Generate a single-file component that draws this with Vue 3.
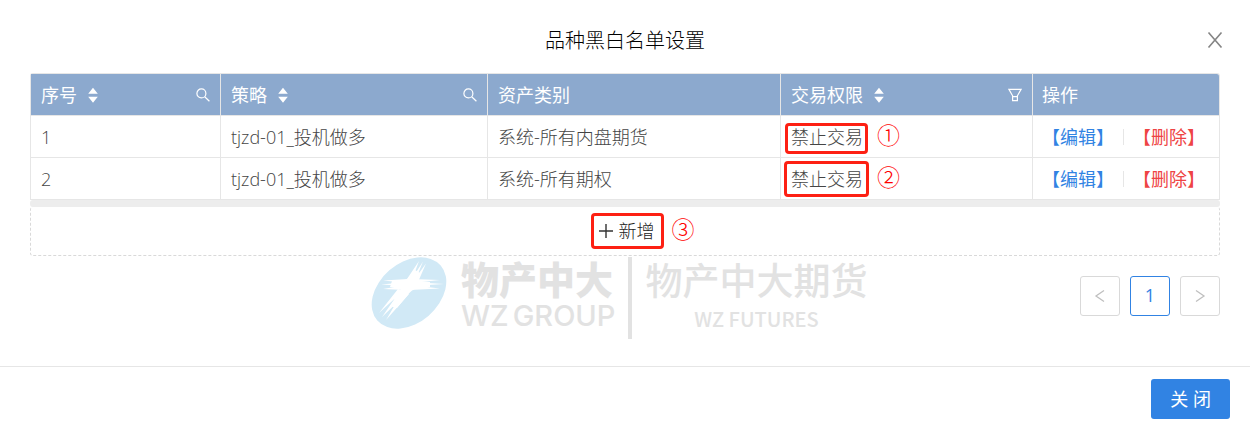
<script setup>
import { ref } from "vue";

const columns = [
  { key: "index", title: "序号", sort: true, icon: "search" },
  { key: "strategy", title: "策略", sort: true, icon: "search" },
  { key: "asset", title: "资产类别" },
  { key: "auth", title: "交易权限", sort: true, icon: "filter" },
  { key: "action", title: "操作" },
];

const rows = ref([
  { index: 1, strategy: "tjzd-01_投机做多", asset: "系统-所有内盘期货", auth: "禁止交易", mark: "①" },
  { index: 2, strategy: "tjzd-01_投机做多", asset: "系统-所有期权", auth: "禁止交易", mark: "②", tall: true },
]);

const visible = ref(true);

function removeRow(row) {
  rows.value = rows.value.filter((r) => r !== row);
}
</script>

<template>
  <div v-if="visible" class="modal" role="dialog" aria-labelledby="modal-title">
    <header class="modal-header">
      <h1 id="modal-title">品种黑白名单设置</h1>
      <button class="modal-close" type="button" aria-label="关闭窗口" @click="visible = false">
        <svg width="16" height="16" viewBox="0 0 16 16" fill="none" stroke="#858585" stroke-width="1.6">
          <path d="M1.5 0.5L14.5 15.5M14.5 0.5L1.5 15.5" />
        </svg>
      </button>
    </header>

    <main class="modal-body">
      <table class="grid">
        <colgroup>
          <col v-for="c in columns" :key="c.key" :class="'col-' + c.key" />
        </colgroup>
        <thead>
          <tr>
            <th v-for="c in columns" :key="c.key" scope="col">
              <div class="th-inner">
                <span>{{ c.title }}</span>
                <button v-if="c.sort" class="th-btn" type="button" :aria-label="c.title + '排序'">
                  <svg width="10" height="16" viewBox="0 0 10 16" fill="#fff">
                    <path d="M5 0.8L9.8 6.8H0.2zM5 15.8L9.8 9.8H0.2z" />
                  </svg>
                </button>
                <button v-if="c.icon" class="th-btn th-tool" type="button" :aria-label="c.title + '筛选'">
                  <svg width="14" height="14" viewBox="0 0 14 14" fill="none" stroke="#fff" stroke-width="1.2">
                    <template v-if="c.icon === 'search'">
                      <circle cx="5.4" cy="5.4" r="4.5" />
                      <path d="M8.7 8.7L13.4 13.2" />
                    </template>
                    <path v-else d="M0.9 1.4H13.1L9.4 7.8V12.6H4.6V7.8zM4.6 8.6H9.4" />
                  </svg>
                </button>
              </div>
            </th>
          </tr>
        </thead>
        <tbody>
          <tr v-for="row in rows" :key="row.index">
            <td>{{ row.index }}</td>
            <td>{{ row.strategy }}</td>
            <td>{{ row.asset }}</td>
            <td>
              <div class="marked">
                <span class="framed" :class="{ tall: row.tall }">{{ row.auth }}</span>
                <span class="mark">{{ row.mark }}</span>
              </div>
            </td>
            <td>
              <div class="actions">
                <a href="#" class="edit" @click.prevent>【编辑】</a>
                <i class="divider"></i>
                <a href="#" class="remove" @click.prevent="removeRow(row)">【删除】</a>
              </div>
            </td>
          </tr>
        </tbody>
      </table>
      <div class="scrollbar"></div>

      <button class="add" type="button">
        <span class="framed tall add-label">
          <svg width="16" height="16" viewBox="0 0 16 16" stroke="#333" stroke-width="1.4">
            <path d="M1 8H15M8 1V15" />
          </svg>
          新增
        </span>
        <span class="mark">③</span>
      </button>

      <nav class="pager" aria-label="分页">
        <button type="button" disabled aria-label="上一页">
          <svg width="12" height="14" viewBox="0 0 12 14" fill="none" stroke="#bfbfbf" stroke-width="1.3">
            <path d="M10 1.5L2 7L10 12.5" />
          </svg>
        </button>
        <button type="button" class="current">1</button>
        <button type="button" disabled aria-label="下一页">
          <svg width="12" height="14" viewBox="0 0 12 14" fill="none" stroke="#bfbfbf" stroke-width="1.3">
            <path d="M2 1.5L10 7L2 12.5" />
          </svg>
        </button>
      </nav>

      <div class="watermark">
        <svg width="78" height="72" viewBox="0 0 78 72">
          <ellipse cx="39" cy="36" rx="42" ry="30" fill="#d1e9f6" transform="rotate(-41 39 36)" />
          <path d="M22 24L35 23Q40 21 45 13L50 16Q47 21 48 24L60 25V30L47 31Q41 33 37 39L27 51L20 49L30 36Q32 32 29 31L20 30Z" fill="#fff" />
          <g fill="#fff">
            <path d="M13 23.500L38 22V26ZM11 27.500L38 25V29ZM13 32L36 28V33Z" />
            <path d="M70 23L42 22V26ZM74 27L42 25V29ZM70 31.500L40 28V33Z" />
            <path d="M49 4L37 22L42 23ZM53 4.500L41 23L45 24ZM56 6.500L44 23L48 25Z" />
            <path d="M9 56L28 32L33 34ZM12 60L30 34L36 37ZM16 63L32 36L39 37Z" />
          </g>
        </svg>
        <div class="wm-group">
          <span class="wm-cn">物产中大</span>
          <span class="wm-en"><span>WZ</span> <span>GROUP</span></span>
        </div>
        <i class="wm-bar"></i>
        <div class="wm-futures">
          <span class="wm-cn">物产中大期货</span>
          <span class="wm-en">WZ FUTURES</span>
        </div>
      </div>
    </main>

    <footer class="modal-footer">
      <button class="primary" type="button" @click="visible = false">关 闭</button>
    </footer>
  </div>
</template>

<style>
body {
  background: #fff;
}
</style>

<style scoped>
.modal {
  font-family: "Open Sans", "Noto Sans CJK SC", sans-serif;
  font-size: 18px;
  font-weight: 300;
  line-height: 26px;
  color: #444;
  background: #fff;
}
button {
  font: inherit;
  cursor: pointer;
}
svg {
  display: block;
}

.modal-header {
  position: relative;
  padding: 27px 60px 18px;
  text-align: center;
}
.modal-header h1 {
  margin: 0;
  font-size: 20px;
  font-weight: 300;
  line-height: 28px;
  color: #000;
}
.modal-close {
  position: absolute;
  top: 32px;
  right: 27px;
  padding: 0;
  border: 0;
  background: none;
}

.modal-body {
  position: relative;
  padding: 0 30px 50px;
}
.grid {
  width: 100%;
  table-layout: fixed;
  border-collapse: separate;
  border-spacing: 0;
  border: 1px solid #e6e6e6;
  border-width: 1px 0 0 1px;
  border-radius: 3px 3px 0 0;
}
.col-index { width: 190px; }
.col-strategy { width: 267px; }
.col-auth { width: 252px; }
.col-action { width: 187px; }
.grid th,
.grid td {
  height: 41px;
  padding: 0 10px;
  border: 1px solid #e6e6e6;
  border-width: 0 1px 1px 0;
  text-align: left;
  white-space: nowrap;
}
.grid th {
  background: #8ca9ce;
  color: #fff;
  font-weight: 400;
}
.grid th:last-child,
.grid td:last-child {
  padding-left: 9px;
}
.grid th:last-child {
  border-radius: 0 3px 0 0;
}
.th-inner {
  display: flex;
  align-items: center;
  gap: 11px;
}
.th-btn {
  padding: 0;
  border: 0;
  background: none;
}
.th-tool {
  margin-left: auto;
}

.marked {
  display: flex;
  align-items: center;
}
.framed {
  position: relative;
}
.framed::after {
  content: "";
  position: absolute;
  inset: -1px -5px -4px -6px;
  border: 3px solid #fd2013;
  border-radius: 4px;
}
.framed.tall::after {
  inset: -5px -6px -5px -7px;
}
.mark {
  margin-left: 14px;
  font-family: "Noto Sans CJK SC", sans-serif;
  font-size: 23px;
  color: #f00;
}
.marked .mark {
  margin-top: -6px;
}

.actions {
  display: flex;
  align-items: center;
  gap: 9px;
}
.actions a {
  font-weight: 400;
  text-decoration: none;
}
.edit { color: #3183e3; }
.remove { color: #ee4444; }
.divider {
  width: 1px;
  height: 16px;
  background: #e6e6e6;
}

.scrollbar {
  height: 7px;
  border-radius: 3px;
  background: #ededed;
}
.add {
  display: flex;
  align-items: center;
  justify-content: center;
  width: 100%;
  height: 49px;
  padding: 0;
  border: 1px dashed #d9d9d9;
  border-top: 0;
  border-radius: 3px;
  background: #fff;
  color: #222;
}
.add-label {
  display: flex;
  align-items: center;
  gap: 5px;
  margin-left: 42px;
  padding-right: 3px;
}
.add .mark {
  margin: -6px 0 0 14px;
}

.pager {
  display: flex;
  justify-content: flex-end;
  gap: 10px;
  margin-top: 20px;
}
.pager button {
  display: flex;
  align-items: center;
  justify-content: center;
  width: 40px;
  height: 40px;
  padding: 0;
  border: 1px solid #d9d9d9;
  border-radius: 3px;
  background: #fff;
}
.pager .current {
  padding-bottom: 2px;
  border-color: #3183e3;
  color: #3183e3;
  font-weight: 400;
}

.watermark {
  position: absolute;
  top: 184px;
  left: calc(50% - 255px);
  display: flex;
  color: #e2e2e2;
  white-space: nowrap;
  pointer-events: none;
}
.wm-group,
.wm-futures {
  display: flex;
  flex-direction: column;
}
.wm-group {
  margin-left: 13px;
}
.wm-group .wm-cn {
  font-size: 38px;
  font-weight: 900;
  line-height: 44px;
}
.wm-group .wm-en {
  display: flex;
  gap: 4px;
  font-family: Inter, sans-serif;
  font-size: 29px;
  font-weight: 500;
  line-height: 30px;
}
.wm-bar {
  width: 4px;
  height: 82px;
  margin: 0 13px;
  background: #e2e2e2;
}
.wm-futures {
  align-items: center;
}
.wm-futures .wm-cn {
  font-size: 37px;
  font-weight: 500;
  line-height: 48px;
}
.wm-futures .wm-en {
  font-family: "Noto Sans CJK SC", sans-serif;
  font-size: 20px;
  font-weight: 500;
  line-height: 28px;
}

.modal-footer {
  display: flex;
  justify-content: flex-end;
  padding: 12px 20px 15px;
  border-top: 1px solid #e6e6e6;
}
.primary {
  height: 40px;
  padding: 0 19px;
  border: 0;
  border-radius: 3px;
  background: #3183e3;
  color: #fff;
  font-weight: 400;
}
</style>
